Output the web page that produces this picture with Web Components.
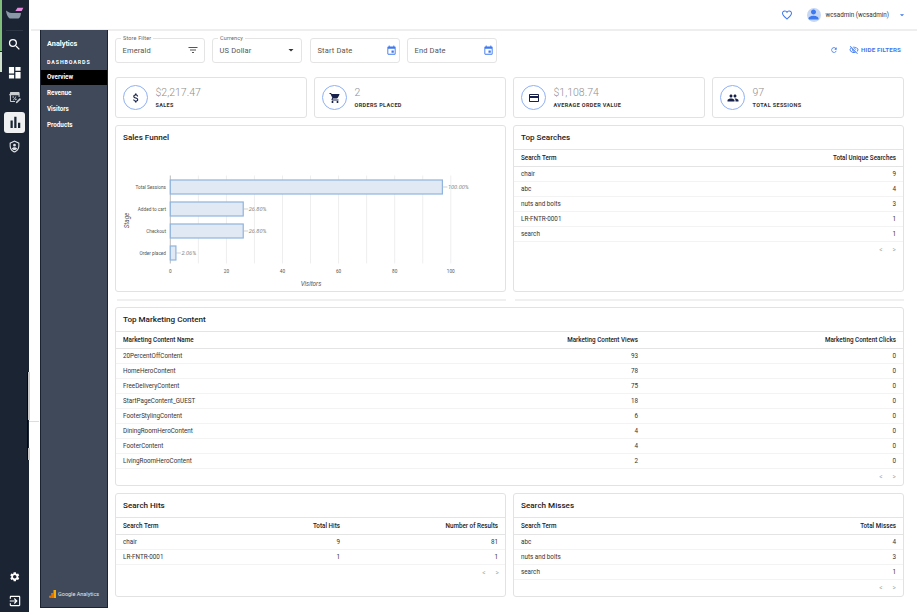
<!DOCTYPE html>
<html><head><meta charset="utf-8">
<style>
html,body{margin:0;padding:0;background:#fff;overflow:hidden}
body{width:917px;height:613px;font-family:Roboto,"Liberation Sans",sans-serif;color:#222}
</style></head><body>
<app-shell></app-shell>
<script>
const P={
search:'M15.5 14h-.79l-.28-.27A6.471 6.471 0 0 0 16 9.5 6.5 6.5 0 1 0 9.5 16c1.61 0 3.09-.59 4.23-1.57l.27.28v.79l5 4.99L20.49 19l-4.99-5zm-6 0C7.01 14 5 11.99 5 9.5S7.01 5 9.5 5 14 7.01 14 9.5 11.99 14 9.5 14z',
dashboard:'M3 13h8V3H3v10zm0 8h8v-6H3v6zm10 0h8V11h-8v10zm0-18v6h8V3h-8z',
bars:'M6 10h3v10H6zM11 5h3v15h-3zM16 13h3v7h-3z',
settings:'M19.14 12.94c.04-.3.06-.61.06-.94 0-.32-.02-.64-.07-.94l2.03-1.58c.18-.14.23-.41.12-.61l-1.92-3.32c-.12-.22-.37-.29-.59-.22l-2.39.96c-.5-.38-1.03-.7-1.62-.94l-.36-2.54c-.04-.24-.24-.41-.48-.41h-3.84c-.24 0-.43.17-.47.41l-.36 2.54c-.59.24-1.13.57-1.62.94l-2.39-.96c-.22-.08-.47 0-.59.22L2.74 8.87c-.12.21-.08.47.12.61l2.03 1.58c-.05.3-.09.63-.09.94s.02.64.07.94l-2.03 1.58c-.18.14-.23.41-.12.61l1.92 3.32c.12.22.37.29.59.22l2.39-.96c.5.38 1.03.7 1.62.94l.36 2.54c.05.24.24.41.48.41h3.84c.24 0 .44-.17.47-.41l.36-2.54c.59-.24 1.13-.56 1.62-.94l2.39.96c.22.08.47 0 .59-.22l1.92-3.32c.12-.22.07-.47-.12-.61l-2.01-1.58zM12 15.6c-1.98 0-3.6-1.62-3.6-3.6s1.62-3.6 3.6-3.6 3.6 1.62 3.6 3.6-1.62 3.6-3.6 3.6z',
cart:'M7 18c-1.1 0-1.99.9-1.99 2S5.9 22 7 22s2-.9 2-2-.9-2-2-2zM1 2v2h2l3.6 7.59-1.35 2.45c-.16.28-.25.61-.25.96 0 1.1.9 2 2 2h12v-2H7.42c-.14 0-.25-.11-.25-.25l.03-.12.9-1.83h7.45c.75 0 1.41-.41 1.75-1.03l3.58-6.49c.08-.14.12-.31.12-.49 0-.55-.45-1-1-1H5.21l-.94-2H1zm16 16c-1.1 0-1.99.9-1.99 2s.89 2 1.99 2 2-.9 2-2-.9-2-2-2z',
card:'M20 4H4c-1.11 0-1.99.89-1.99 2L2 18c0 1.11.89 2 2 2h16c1.11 0 2-.89 2-2V6c0-1.11-.89-2-2-2zm0 14H4v-6h16v6zm0-10H4V6h16v2z',
group:'M16 11c1.66 0 2.99-1.34 2.99-3S17.66 5 16 5c-1.66 0-3 1.34-3 3s1.34 3 3 3zm-8 0c1.66 0 2.99-1.34 2.99-3S9.66 5 8 5C6.34 5 5 6.34 5 8s1.34 3 3 3zm0 2c-2.33 0-7 1.17-7 3.5V19h14v-2.5c0-2.33-4.67-3.5-7-3.5zm8 0c-.29 0-.62.02-.97.05 1.16.84 1.97 1.97 1.97 3.45V19h6v-2.5c0-2.33-4.67-3.5-7-3.5z',
money:'M11.8 10.9c-2.27-.59-3-1.2-3-2.15 0-1.09 1.01-1.85 2.7-1.85 1.78 0 2.44.85 2.5 2.1h2.21c-.07-1.72-1.12-3.3-3.21-3.81V3h-3v2.16c-1.94.42-3.5 1.68-3.5 3.61 0 2.31 1.91 3.46 4.7 4.13 2.5.6 3 1.48 3 2.41 0 .69-.49 1.79-2.7 1.79-2.06 0-2.87-.92-2.98-2.1h-2.2c.12 2.19 1.76 3.42 3.68 3.83V21h3v-2.15c1.95-.37 3.5-1.5 3.5-3.55 0-2.84-2.43-3.81-4.7-4.4z',
filter:'M10 18h4v-2h-4v2zM3 6v2h18V6H3zm3 7h12v-2H6v2z',
event:'M17 12h-5v5h5v-5zM16 1v2H8V1H6v2H5c-1.11 0-1.99.9-1.99 2L3 19c0 1.1.89 2 2 2h14c1.1 0 2-.9 2-2V5c0-1.1-.9-2-2-2h-1V1h-2zm3 18H5V8h14v11z',
refresh:'M17.65 6.35C16.2 4.9 14.21 4 12 4c-4.42 0-7.99 3.58-7.99 8s3.57 8 7.99 8c3.73 0 6.84-2.55 7.73-6h-2.08c-.82 2.33-3.04 4-5.65 4-3.31 0-6-2.69-6-6s2.69-6 6-6c1.66 0 3.14.69 4.22 1.78L13 11h7V4l-2.35 2.35z',
hide:'M12 6c3.79 0 7.17 2.13 8.82 5.5-.59 1.22-1.42 2.27-2.41 3.12l1.41 1.41c1.39-1.23 2.49-2.77 3.18-4.53C21.27 7.11 17 4 12 4c-1.27 0-2.49.2-3.64.57l1.65 1.65C10.66 6.09 11.32 6 12 6zm-1.07 1.14L13 9.21c.57.25 1.03.71 1.28 1.28l2.07 2.07c.08-.34.14-.7.14-1.07C16.5 9.01 14.48 7 12 7c-.37 0-.72.05-1.07.14zM2.01 3.87l2.68 2.68C3.06 7.83 1.77 9.53 1 11.5 2.73 15.89 7 19 12 19c1.52 0 2.98-.29 4.32-.82l3.42 3.42 1.41-1.41L3.42 2.45 2.01 3.87zm7.5 7.5l2.61 2.61c-.04.01-.08.02-.12.02-1.38 0-2.5-1.12-2.5-2.5 0-.05.01-.08.01-.13zm-3.4-3.4l1.75 1.75c-.23.55-.36 1.15-.36 1.78 0 2.48 2.02 4.5 4.5 4.5.63 0 1.23-.13 1.77-.36l.98.98c-.88.24-1.8.38-2.75.38-3.79 0-7.17-2.13-8.82-5.5.7-1.43 1.72-2.61 2.93-3.53z',
heart:'M16.5 3c-1.74 0-3.41.81-4.5 2.09C10.91 3.81 9.24 3 7.5 3 4.42 3 2 5.42 2 8.5c0 3.78 3.4 6.86 8.55 11.54L12 21.35l1.45-1.32C18.6 15.36 22 12.28 22 8.5 22 5.42 19.58 3 16.5 3zm-4.4 15.55l-.1.1-.1-.1C7.14 14.24 4 11.39 4 8.5 4 6.5 5.5 5 7.5 5c1.54 0 3.04.99 3.57 2.36h1.87C13.46 5.99 14.96 5 16.5 5c2 0 3.5 1.5 3.5 3.5 0 2.89-3.14 5.74-7.9 10.05z',
shield:'M12 1 3 5v6c0 5.55 3.84 10.74 9 12 5.16-1.26 9-6.45 9-12V5l-9-4zm0 2.2 7 3.1V11c0 4.5-2.97 8.7-7 9.9-4.03-1.2-7-5.4-7-9.9V6.3l7-3.1zM12 7a2.6 2.6 0 1 0 0 5.2A2.6 2.6 0 0 0 12 7zm0 6.4c-2 0-4.6 1-4.7 2.6 1.1 1.5 2.8 2.5 4.7 2.5s3.6-1 4.7-2.500c-.1-1.600-2.700-2.600-4.700-2.600z',
promo:'M19 2H6C4.500 2 3.500 3 3.500 4.500V6H2v2h1.500v10c0 1.500 1 2.500 2.500 2.500h7v-2H6c-.3 0-.5-.2-.5-.5V8H19.500v3H21.500V4.500C21.500 3 20.500 2 19 2zM9.500 9.500a1.500 1.500 0 1 0 0 3 1.500 1.500 0 0 0 0-3zM14 10l-5 7h1.600l5-7H14zM14.500 14a1.500 1.500 0 1 0 0 3 1.500 1.500 0 0 0 0-3zM22 13l-7 7-.5 2.500 2.500-.5 7-7z',
exit:'M10.09 15.59 11.5 17l5-5-5-5-1.41 1.41L12.67 11H3v2h9.670l-2.580 2.590zM19 3H5c-1.110 0-2 .9-2 2v3h2V5h14v14H5v-3H3v3c0 1.100.890 2 2 2h14c1.100 0 2-.9 2-2V5c0-1.100-.9-2-2-2z',
drop:'M7 10l5 5 5-5z',
person:'M12 12c2.210 0 4-1.790 4-4s-1.790-4-4-4-4 1.790-4 4 1.790 4 4 4zm0 2c-2.670 0-8 1.340-8 4v2h16v-2c0-2.660-5.330-4-8-4z'
};
class BaseEl extends HTMLElement{
  mount(html){const r=this.attachShadow({mode:'open'});r.innerHTML=html;return r;}
}
customElements.define('x-icon',class extends BaseEl{
  connectedCallback(){
    if(this.shadowRoot)return;
    const s=this.getAttribute('size')||14,c=this.getAttribute('color')||'currentColor',n=this.getAttribute('name');
    this.mount(`<style>:host{display:inline-flex;flex:none;width:${s}px;height:${s}px}svg{display:block;width:100%;height:100%}</style><svg viewBox="0 0 24 24" fill="${c}"><path d="${P[n]}"/></svg>`);
  }
});
customElements.define('rail-btn',class extends BaseEl{
  connectedCallback(){
    const a=this.hasAttribute('active');
    this.mount(`<style>:host{display:flex;align-items:center;justify-content:center;width:21px;height:21px;border-radius:3px;background:${a?'#eef0f1':'transparent'};color:${a?'#1a2433':(this.getAttribute('tone')||'#fff')}}</style><x-icon name="${this.getAttribute('icon')}" size="${this.getAttribute('size')||14}"></x-icon>`);
  }
});
customElements.define('app-rail',class extends BaseEl{
  connectedCallback(){
    this.mount(`<style>
    :host{display:flex;flex-direction:column;align-items:center;width:29px;height:612px;background:#1a2433;position:relative;flex:none}
    .logo{height:30px;width:100%;flex:none}
    .logo svg{display:block}
    .sep{width:17px;height:1px;background:#2c3645;flex:none}
    .top{display:flex;flex-direction:column;align-items:center;gap:3.5px;margin-top:2.5px}
    .top .d{margin-top:4.500px}
    .bot{margin-top:auto;display:flex;flex-direction:column;align-items:center;gap:3px;padding-bottom:1px}
    .edge{position:absolute;left:0;top:0;width:2px;height:51px;background:#7fbf7b}
    .edge2{position:absolute;left:0;top:52px;width:2px;height:20px;background:#cfe3cc}
    .sb{position:absolute;left:27px;top:372px;width:1px;height:88px;background:#05080c}
    .sb2{position:absolute;left:28px;top:372px;width:2px;height:48px;background:#c9c9c9}
    .sb3{position:absolute;left:28px;top:448px;width:2px;height:12px;background:#c9c9c9}
    .sb4{position:absolute;left:29px;top:421px;width:10px;height:1px;background:#ddd}
    </style>
    <div class="edge"></div><div class="edge2"></div>
    <div class="logo"><svg width="29" height="30" viewBox="0 0 29 30"><path d="M17.500 7.700h5.800l-1.600 3.200h-6.300z" fill="#e88be0"/><path d="M6 10.500c1.500 1.200 3 2.300 5.500 2.500h9.500c-.3 2.800-1 4.800-2.500 5.600h-7.500C8 18.600 6.500 14.500 6 10.500z" fill="#8b96a6"/></svg></div>
    <div class="sep"></div>
    <div class="top">
      <rail-btn icon="search" size="15"></rail-btn>
      <rail-btn class="d" icon="dashboard" size="15.500"></rail-btn>
      <rail-btn icon="promo" size="13" tone="#c9ccd1"></rail-btn>
      <rail-btn icon="bars" size="18" active></rail-btn>
      <rail-btn icon="shield" size="13" tone="#dfe2e6"></rail-btn>
    </div>
    <div class="sb"></div><div class="sb2"></div><div class="sb3"></div><div class="sb4"></div>
    <div class="bot"><rail-btn icon="settings" size="11.500"></rail-btn><rail-btn icon="exit" size="14"></rail-btn></div>`);
  }
});
customElements.define('sub-nav',class extends BaseEl{
  connectedCallback(){
    this.mount(`<style>
    :host{display:flex;flex-direction:column;width:68px;height:578px;margin-top:-1px;background:#404959;color:#fff;box-sizing:border-box;border-left:1px solid #1a2433;border-right:1px solid #1a2433;border-bottom:1px solid #1a2433;flex:none;font-weight:500}
    .h{font-size:7.300px;padding:9px 6px 0;line-height:10px;font-weight:700}
    .s{font-size:5.300px;letter-spacing:.9px;font-weight:700;padding:9px 6px 0;line-height:8px;margin-bottom:4px}
    a{display:block;font-size:6.300px;line-height:16px;height:16px;padding-left:6px;font-weight:700}
    a.on{background:#000;height:15px;line-height:15px}
    .foot{margin-top:auto;padding:0 0 9px 8px;display:flex;align-items:center;gap:2px;font-size:5.500px;color:#e4e6e9;font-weight:400}
    </style>
    <div class="h">Analytics</div><div class="s">DASHBOARDS</div>
    <a class="on">Overview</a><a>Revenue</a><a>Visitors</a><a>Products</a>
    <div class="foot"><svg width="7" height="8" viewBox="0 0 7 8"><rect x="4.500" width="2.500" height="8" fill="#f9ab00"/><rect x="2.200" y="3" width="2.500" height="5" fill="#e37400"/><circle cx="1.200" cy="6.800" r="1.200" fill="#e37400"/></svg><span>Google Analytics</span></div>`);
  }
});
customElements.define('top-bar',class extends BaseEl{
  connectedCallback(){
    this.mount(`<style>
    :host{display:flex;align-items:center;justify-content:flex-end;height:29px;margin-left:2px;border-bottom:2px solid #eeeeee;background:#fff;box-sizing:content-box;padding-right:10px;font-size:6.300px;color:#333}
    .av{width:14px;height:14px;border-radius:50%;background:#c5d7f5;overflow:hidden;display:flex;align-items:flex-end;justify-content:center;margin:0 5px 0 14px}
    </style>
    <x-icon name="heart" size="12" color="#3f79ef"></x-icon>
    <div class="av"><x-icon name="person" size="15" color="#3f79ef"></x-icon></div>
    <span>wcsadmin (wcsadmin)</span>
    <x-icon name="drop" size="10" color="#3f79ef" style="margin-left:8px"></x-icon>`);
  }
});
customElements.define('filter-field',class extends BaseEl{
  connectedCallback(){
    const l=this.getAttribute('label'),v=this.getAttribute('value'),i=this.getAttribute('icon'),ic=this.getAttribute('icolor')||'#555';
    this.mount(`<style>
    :host{display:flex;align-items:center;justify-content:space-between;width:90px;height:25px;border:1px solid #e4e4e4;border-radius:3px;box-sizing:border-box;padding:0 ${this.getAttribute('pr')||4}px 0 6.500px;position:relative;font-size:7.500px;color:#555;letter-spacing:.15px;background:#fff}
    .l{position:absolute;left:5px;top:-4px;font-size:5.500px;background:#fff;padding:0 2px;line-height:7px;color:#666}
    </style>
    ${l?`<span class="l">${l}</span>`:''}<span>${v}</span><x-icon name="${i}" size="${this.getAttribute('isize')||11}" color="${ic}"></x-icon>`);
  }
});
customElements.define('kpi-card',class extends BaseEl{
  connectedCallback(){
    this.mount(`<style>
    :host{display:flex;align-items:center;height:41px;border:1px solid #e2e2e2;border-radius:3px;box-sizing:border-box;padding-left:7px;background:#fff;flex:1 1 0;min-width:0}
    .c{width:25px;height:25px;border-radius:50%;border:1px solid #8fb0f5;box-sizing:border-box;display:flex;align-items:center;justify-content:center;margin-right:7.500px;flex:none}
    .v{font-size:10.500px;font-weight:300;color:#8f8f8f;line-height:13px}
    .t{font-size:5.500px;font-weight:700;letter-spacing:.35px;color:#333;line-height:8px;margin-top:2px}
    </style>
    <div class="c"><x-icon name="${this.getAttribute('icon')}" size="12" color="#17204a"></x-icon></div>
    <div><div class="v">${this.getAttribute('value')}</div><div class="t">${this.getAttribute('label')}</div></div>`);
  }
});
customElements.define('panel-card',class extends BaseEl{
  connectedCallback(){
    this.mount(`<style>
    :host{display:flex;flex-direction:column;border:1px solid #e2e2e2;border-radius:3px;box-sizing:border-box;background:#fff;min-width:0;flex:1 1 0;height:${this.getAttribute('h')}px}
    .t{font-size:8.100px;font-weight:500;color:#222;height:22.500px;line-height:22.500px;padding-left:7px;flex:none}
    </style><div class="t">${this.getAttribute('title')}</div><slot></slot>`);
  }
});
customElements.define('data-table',class extends BaseEl{
  connectedCallback(){
    const cols=JSON.parse(this.getAttribute('cols')),rows=JSON.parse(this.getAttribute('rows'));
    const g=this.getAttribute('grid');
    const row=(r,c)=>`<div class="${c}">${r.map((x,i)=>`<span class="${i?'r':''}">${x}</span>`).join('')}</div>`;
    this.mount(`<style>
    :host{display:block;font-size:6.300px;color:#333}
    .head,.row{display:grid;grid-template-columns:${g};padding:0 7px;align-items:center;box-sizing:border-box}
    .head{height:18px;border-top:1px solid #e4e4e4;border-bottom:1px solid #e4e4e4;font-weight:500;color:#222}
    .row{height:15px;border-bottom:1px solid #f3f3f3}
    .row:last-of-type{border-bottom:1px solid #e0e0e0}
    .r{text-align:right}
    .pg{height:17px;display:flex;justify-content:flex-end;align-items:center;gap:10px;padding-right:${this.getAttribute('pr')||7}px;font-size:6.500px;color:#aaa}
    </style>
    ${row(cols,'head')}${rows.map(r=>row(r,'row')).join('')}
    <div class="pg"><span>&lt;</span><span>&gt;</span></div>`);
  }
});
customElements.define('funnel-chart',class extends BaseEl{
  connectedCallback(){
    const x=v=>54.300+v*2.805;
    let grid='';for(let i=0;i<=100;i+=10){grid+=`<line x1="${x(i)}" x2="${x(i)}" y1="49" y2="137" stroke="${i?'#eeeeee':'#bbb'}" stroke-width="1"/>`}
    const bars=[['Total Sessions',97,'100.00%',53.500],['Added to cart',26,'26.80%',75.500],['Checkout',26,'26.80%',97.500],['Order placed',2,'2.06%',119.500]];
    let b='';for(const [n,v,p,y] of bars){
      b+=`<rect x="${x(0)}" y="${y}" width="${v*2.805}" height="14" fill="#e0e9f4" stroke="#8fb4dd" stroke-width="1.200"/>
      <text x="50" y="${y+9}" text-anchor="end" class="a">${n}</text>
      <line x1="${x(v)}" x2="${x(v)+5}" y1="${y+7}" y2="${y+7}" stroke="#bbb" stroke-width=".7"/>
      <text x="${x(v)+5.500}" y="${y+9}" class="p">${p}</text>`;
    }
    let t='';for(let i=0;i<=100;i+=20){t+=`<text x="${x(i)}" y="146" text-anchor="middle" class="a">${i}</text>`}
    this.mount(`<style>
    :host{display:block}
    svg{display:block}
    text{font-family:Roboto,"Liberation Sans",sans-serif}
    .a{font-size:4.700px;fill:#555}
    .p{font-size:5.700px;fill:#888;font-style:italic}
    .l{font-size:6.300px;fill:#555;font-style:italic}
    </style><svg width="389" height="143" viewBox="0 22.500 389 143">${grid}${b}${t}
    <text x="195" y="159" text-anchor="middle" class="l">Visitors</text>
    <text transform="translate(12.500 94) rotate(-90)" text-anchor="middle" class="l">Stage</text></svg>`);
  }
});
customElements.define('dash-board',class extends BaseEl{
  connectedCallback(){
    this.mount(`<style>
    :host{display:flex;flex-direction:column;padding:6.500px 13px 0 7px;box-sizing:border-box;flex:1;min-width:0}
    .filters{display:flex;align-items:center;gap:7px;height:25px;margin-bottom:14.500px;}
    .filters .third{margin-left:1px}
    .act{margin-left:auto;margin-right:3px;display:flex;align-items:center;color:#3f79ef;font-size:6.200px;font-weight:700;letter-spacing:.15px;gap:2px}
    .row{display:flex;gap:7px;margin-bottom:7px}
    .rule{display:flex;gap:7px;height:2px;margin-top:6.500px;margin-bottom:6.500px}
    .rule i{flex:1;background:#f0f0f0}
    .rule i:first-child{margin:0 2px}
    </style>
    <div class="filters">
      <filter-field label="Store Filter" value="Emerald" icon="filter" isize="12" pr="5"></filter-field>
      <filter-field label="Currency" value="US Dollar" icon="drop" isize="12" icolor="#333"></filter-field>
      <filter-field class="third" value="Start Date" icon="event" icolor="#3f79ef" pr="2"></filter-field>
      <filter-field value="End Date" icon="event" icolor="#3f79ef" pr="2"></filter-field>
      <div class="act"><x-icon name="refresh" size="8" color="#3f79ef" style="margin-right:9.500px"></x-icon><x-icon name="hide" size="10" color="#3f79ef"></x-icon><span>HIDE FILTERS</span></div>
    </div>
    <div class="row">
      <kpi-card icon="money" value="$2,217.47" label="SALES"></kpi-card>
      <kpi-card icon="cart" value="2" label="ORDERS PLACED"></kpi-card>
      <kpi-card icon="card" value="$1,108.74" label="AVERAGE ORDER VALUE"></kpi-card>
      <kpi-card icon="group" value="97" label="TOTAL SESSIONS"></kpi-card>
    </div>
    <div class="row" style="margin-bottom:0">
      <panel-card title="Sales Funnel" h="167"><funnel-chart></funnel-chart></panel-card>
      <panel-card title="Top Searches" h="167"><data-table grid="1fr auto" cols='["Search Term","Total Unique Searches"]' rows='[["chair","9"],["abc","4"],["nuts and bolts","3"],["LR-FNTR-0001","1"],["search","1"]]'></data-table></panel-card>
    </div>
    <div class="rule"><i></i><i></i></div>
    <div class="row">
      <panel-card title="Top Marketing Content" h="179"><data-table grid="1fr 258px 258px" cols='["Marketing Content Name","Marketing Content Views","Marketing Content Clicks"]' rows='[["20PercentOffContent","93","0"],["HomeHeroContent","78","0"],["FreeDeliveryContent","75","0"],["StartPageContent_GUEST","18","0"],["FooterStylingContent","6","0"],["DiningRoomHeroContent","4","0"],["FooterContent","4","0"],["LivingRoomHeroContent","2","0"]]'></data-table></panel-card>
    </div>
    <div class="row" style="margin:0">
      <panel-card title="Search Hits" h="104"><data-table grid="1fr 158px 158px" pr="6" cols='["Search Term","Total Hits","Number of Results"]' rows='[["chair","9","81"],["LR-FNTR-0001","1","1"]]'></data-table></panel-card>
      <panel-card title="Search Misses" h="104"><data-table grid="1fr auto" cols='["Search Term","Total Misses"]' rows='[["abc","4"],["nuts and bolts","3"],["search","1"]]'></data-table></panel-card>
    </div>`);
  }
});
customElements.define('app-shell',class extends BaseEl{
  connectedCallback(){
    this.mount(`<style>
    :host{display:flex;width:917px;height:613px;overflow:hidden}
    .col{flex:1;min-width:0;display:flex;flex-direction:column}
    .body{display:flex;flex:1;min-height:0;padding-left:11px}
    </style>
    <app-rail></app-rail>
    <div class="col"><top-bar></top-bar><div class="body"><sub-nav></sub-nav><dash-board></dash-board></div></div>`);
  }
});
</script>
</body></html>
